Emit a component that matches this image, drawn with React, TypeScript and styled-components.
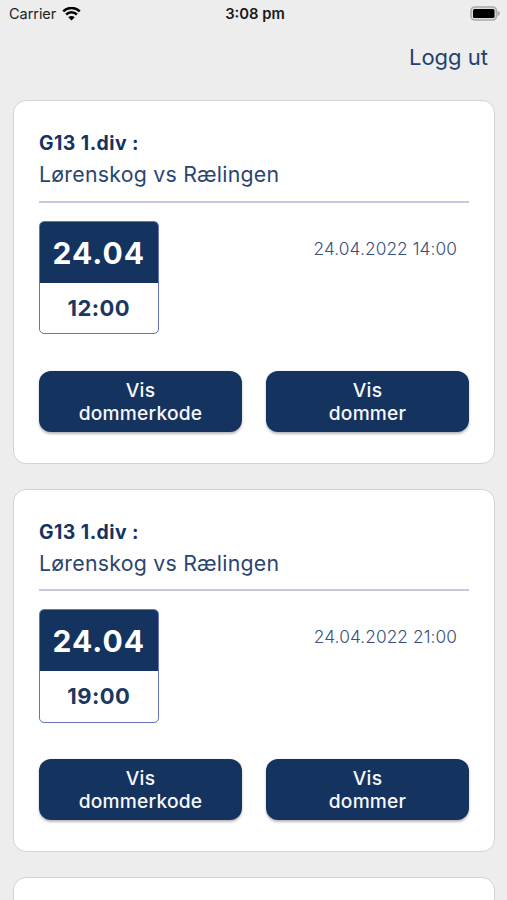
import React from "react";
import styled, { createGlobalStyle } from "styled-components";

const Global = createGlobalStyle`
  * { box-sizing: border-box; }
  html, body { margin: 0; background: #ededed; overflow: hidden; }
`;
const Screen = styled.div`
  width: 507px; height: 900px; overflow: hidden; background: #ededed;
  font-family: Inter, sans-serif; color: #15335f;
`;
const StatusBar = styled.div`
  height: 27px; display: grid; grid-template-columns: 1fr auto 1fr; align-items: center;
  padding: 0 6px 0 9px; color: #222;
`;
const Carrier = styled.div`display: flex; align-items: center; gap: 6px; font-size: 14.5px; letter-spacing: -0.05px;`;
const Time = styled.div`font-weight: 600; font-size: 14.8px; color: #1a1a1a;`;
const Power = styled.div`display: flex; justify-content: flex-end;`;
const TopBar = styled.header`
  height: 73px; padding: 16px 19px 0 0; display: flex; justify-content: flex-end;
`;
const Logout = styled.a`font-size: 22px; line-height: 28px; color: #24406e;`;
const List = styled.main`display: flex; flex-direction: column; gap: 25px; padding: 0 12px 0 13px;`;
const Card = styled.article`
  height: 363.5px; flex-shrink: 0; background: #fff; border: 1px solid #d3d3d4; border-radius: 13px;
  padding: 27px 25px 0;
`;
const Heading = styled.div`border-bottom: 2px solid #c5c8de; height: 74.5px;`;
const League = styled.div`font-weight: 700; font-size: 19.4px; line-height: 31px; letter-spacing: 0.45px;`;
const Teams = styled.div`font-size: 21.3px; line-height: 31px; letter-spacing: 0.25px; color: #2b4570;`;
const Details = styled.div`display: flex; justify-content: space-between; margin-top: 18px;`;
const DateBox = styled.div`
  width: 119.5px; height: 113.5px; border: 1px solid #6573bd; border-radius: 5px; text-align: center;
`;
const Day = styled.div`
  height: 61px; border-radius: 4px 4px 0 0; background: #15335f; color: #fff;
  font-weight: 700; font-size: 30px; line-height: 62px; letter-spacing: 1px;
`;
const Hour = styled.div`font-weight: 700; font-size: 22px; line-height: 51px; letter-spacing: 0.4px; color: #1b3762;`;
const Stamp = styled.div`font-size: 17.3px; line-height: 24px; margin: 16.4px 12px 0 0; letter-spacing: 0.08px; font-weight: 300; color: #394f7d;`;
const Actions = styled.div`display: grid; grid-template-columns: 1fr 1fr; gap: 24px; margin-top: 36.5px;`;
const Button = styled.button`
  height: 61px; border: 0; border-radius: 12px; background: #15335f; color: #f6f8fc; padding: 1px 0 0;
  font: 500 19.2px/23px Inter, sans-serif; letter-spacing: 0.2px; box-shadow: 0 1.5px 2.5px rgba(0,0,0,.28);
  span { display: block; }
`;

const Wifi = () => (
  <svg width="19" height="14" viewBox="0 0 19 14">
    <path d="M1.2 4.3a12 12 0 0 1 16.6 0M4.1 7.5a7.8 7.8 0 0 1 10.8 0" fill="none" stroke="#050505" strokeWidth="2.5" />
    <path d="M6.3 10.2a4.6 4.6 0 0 1 6.4 0L9.5 13.4Z" fill="#050505" />
  </svg>
);
const Battery = () => (
  <svg width="31" height="15" viewBox="0 0 31 15">
    <rect x="1" y="1" width="25.5" height="13" rx="4" fill="#dedede" stroke="#aaa" strokeWidth="1.6" />
    <rect x="3" y="3" width="21.5" height="9" rx="1.5" fill="#000" />
    <path d="M27.5 4.8q2.5 1 2.5 2.7t-2.5 2.7Z" fill="#aaa" />
  </svg>
);

const matches = [
  { hour: "12:00", stamp: "24.04.2022 14:00" },
  { hour: "19:00", stamp: "24.04.2022 21:00" },
];

export default function App() {
  return (
    <Screen>
      <Global />
      <StatusBar>
        <Carrier>Carrier <Wifi /></Carrier>
        <Time>3:08 pm</Time>
        <Power><Battery /></Power>
      </StatusBar>
      <TopBar><Logout>Logg ut</Logout></TopBar>
      <List>
        {matches.map((m) => (
          <Card key={m.stamp}>
            <Heading>
              <League>G13 1.div :</League>
              <Teams>Lørenskog vs Rælingen</Teams>
            </Heading>
            <Details>
              <DateBox><Day>24.04</Day><Hour>{m.hour}</Hour></DateBox>
              <Stamp>{m.stamp}</Stamp>
            </Details>
            <Actions>
              <Button><span>Vis</span><span>dommerkode</span></Button>
              <Button><span>Vis</span><span>dommer</span></Button>
            </Actions>
          </Card>
        ))}
        <Card />
      </List>
    </Screen>
  );
}
